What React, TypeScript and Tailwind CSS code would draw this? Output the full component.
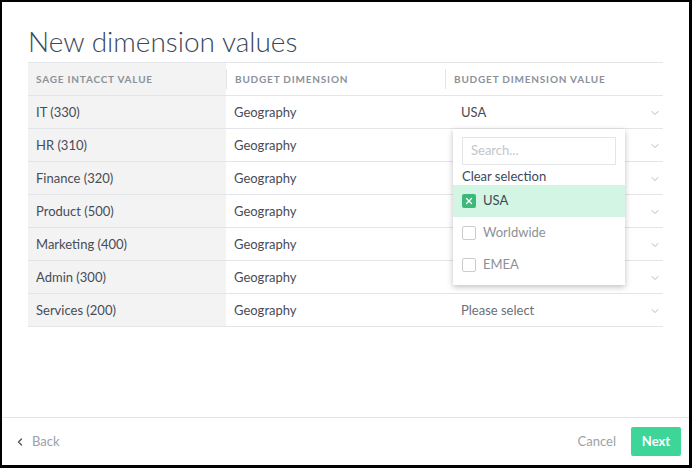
import { ChevronDown, ChevronLeft, X } from "lucide-react";

const rows = [
  { name: "IT (330)", dim: "Geography", value: "USA" },
  { name: "HR (310)", dim: "Geography", value: "" },
  { name: "Finance (320)", dim: "Geography", value: "" },
  { name: "Product (500)", dim: "Geography", value: "" },
  { name: "Marketing (400)", dim: "Geography", value: "" },
  { name: "Admin (300)", dim: "Geography", value: "" },
  { name: "Services (200)", dim: "Geography", value: "Please select" },
];

const options = [
  { label: "USA", checked: true },
  { label: "Worldwide", checked: false },
  { label: "EMEA", checked: false },
];

export default function App() {
  return (
    <div
      className="w-[692px] h-[468px] bg-white border-black border-t-2 border-l-2 border-r-[3px] border-b-[3px] flex flex-col"
      style={{ fontFamily: "Lato, 'Open Sans', sans-serif" }}
    >
      <div className="flex-1 px-[26px] pt-[22px]">
        <h1 className="text-[28px] leading-[34px] font-light text-[#3c4858] mb-[4px]">New dimension values</h1>

        <div className="relative">
          <table className="w-[635px] border-collapse text-[13px] text-[#474c55]">
            <thead>
              <tr className="border-t border-b border-[#e3e5e8] h-[33px]">
                <th className="w-[198px] bg-[#f3f3f4] text-left pl-[8px] text-[10px] font-bold tracking-[0.08em] text-[#8c9199] uppercase">
                  Sage Intacct value
                </th>
                <th className="w-[219px] text-left text-[10px] font-bold tracking-[0.08em] text-[#8c9199] uppercase">
                  <div className="border-l border-[#e3e5e8] pl-[8px] leading-[20px]">Budget dimension</div>
                </th>
                <th className="text-left text-[10px] font-bold tracking-[0.08em] text-[#8c9199] uppercase">
                  <div className="border-l border-[#e3e5e8] pl-[8px] leading-[20px]">Budget dimension value</div>
                </th>
              </tr>
            </thead>
            <tbody>
              {rows.map((r) => (
                <tr key={r.name} className="border-b border-[#e3e5e8] h-[33px]">
                  <td className="bg-[#f3f3f4] pl-[8px] pt-[1px]">{r.name}</td>
                  <td className="pl-[8px] pt-[1px]">{r.dim}</td>
                  <td className="pl-[16px] pt-[1px]">
                    <div className="flex items-center justify-between pr-[2px]">
                      <span className={r.value === "Please select" ? "text-[#6b7079]" : ""}>{r.value}</span>
                      <ChevronDown className="w-[12px] h-[12px] text-[#9ca1a8]" strokeWidth={1.5} />
                    </div>
                  </td>
                </tr>
              ))}
            </tbody>
          </table>

          <div className="absolute left-[425px] top-[67px] w-[172px] bg-white shadow-[0_2px_6px_rgba(0,0,0,0.25)] pb-[4px] text-[13px]">
            <div className="px-[9px] pt-[8px]">
              <div className="h-[28px] border border-[#e3e5e8] flex items-center px-[8px] text-[#c2c6cc]">Search...</div>
              <div className="text-[#3c4858] mt-[2px] leading-[18px]">Clear selection</div>
            </div>
            {options.map((o) => (
              <div
                key={o.label}
                className={`h-[32px] flex items-center gap-[7px] px-[9px] ${o.checked ? "bg-[#d2f5e4] text-[#3c4858]" : "text-[#8c9199]"}`}
              >
                {o.checked ? (
                  <span className="w-[14px] h-[14px] rounded-[2px] bg-[#3cb878] flex items-center justify-center">
                    <X className="w-[10px] h-[10px] text-white" strokeWidth={3} />
                  </span>
                ) : (
                  <span className="w-[14px] h-[14px] rounded-[2px] border border-[#c8ccd1] bg-white" />
                )}
                <span>{o.label}</span>
              </div>
            ))}
          </div>
        </div>
      </div>

      <div className="h-[48px] border-t border-[#e3e5e8] flex items-center justify-between pl-[12px] pr-[8px] text-[13px]">
        <div className="flex items-center gap-[6px] text-[#9ca1a8]">
          <ChevronLeft className="w-[12px] h-[12px] text-[#4a4f57]" strokeWidth={2.5} />
          <span>Back</span>
        </div>
        <div className="flex items-center gap-[15px]">
          <span className="text-[#9ca1a8]">Cancel</span>
          <button className="h-[29px] w-[50px] rounded-[2px] bg-[#3dd598] text-white font-bold text-[13px]">Next</button>
        </div>
      </div>
    </div>
  );
}
